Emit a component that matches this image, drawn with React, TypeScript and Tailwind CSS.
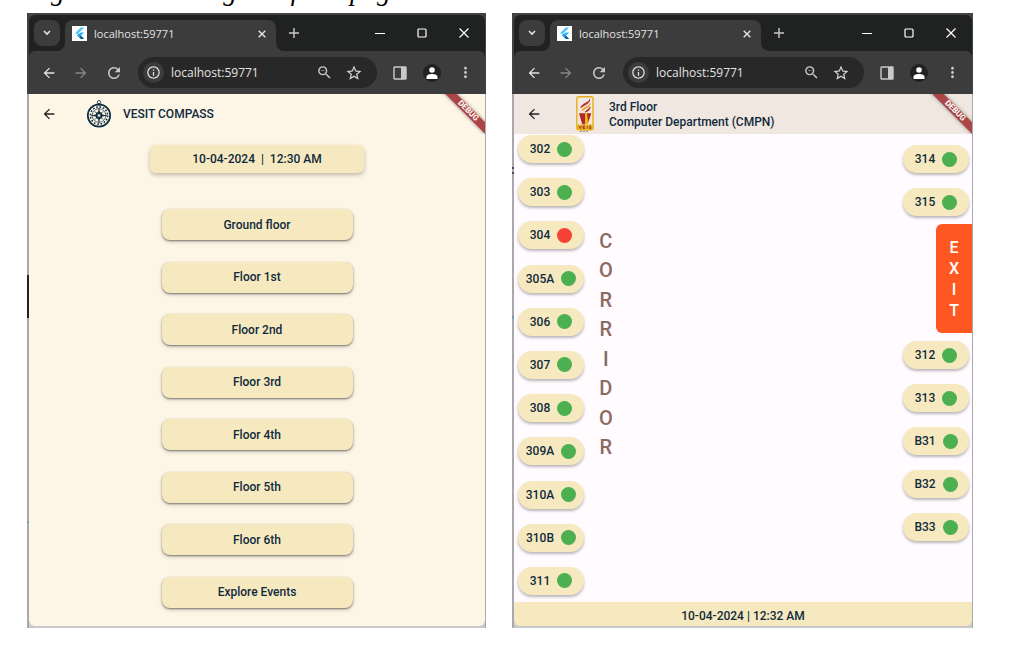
import React from "react";
import {
  MdArrowBack,
  MdArrowForward,
  MdInfoOutline,
  MdMoreVert,
  MdRefresh,
  MdStarBorder,
  MdZoomOut,
} from "react-icons/md";

const floors = [
  "Ground floor",
  "Floor 1st",
  "Floor 2nd",
  "Floor 3rd",
  "Floor 4th",
  "Floor 5th",
  "Floor 6th",
  "Explore Events",
];

type Room = { name: string; busy?: boolean };

const leftRooms: Room[] = [
  { name: "302" },
  { name: "303" },
  { name: "304", busy: true },
  { name: "305A" },
  { name: "306" },
  { name: "307" },
  { name: "308" },
  { name: "309A" },
  { name: "310A" },
  { name: "310B" },
  { name: "311" },
];
const rightTop: Room[] = [{ name: "314" }, { name: "315" }];
const rightBottom: Room[] = [
  { name: "312" },
  { name: "313" },
  { name: "B31" },
  { name: "B32" },
  { name: "B33" },
];

function FlutterIcon() {
  return (
    <svg viewBox="0 0 15 15" className="h-[15px] w-[15px] shrink-0">
      <rect width="15" height="15" fill="#fff" />
      <path d="M8.6 1.6h3.6L5.1 8.7 3.3 6.9z" fill="#54c5f8" />
      <path d="M8.6 6.4h3.6L9.2 9.4 7.4 11.2 5.3 9.6z" fill="#29b6f6" />
      <path d="M5.4 9.6 7.2 7.8 12.2 13H8.8z" fill="#01579b" />
      <path d="M5.4 9.6 7.2 7.8 9.1 9.6 7.3 11.4z" fill="#2ba7ee" />
    </svg>
  );
}

function CompassLogo() {
  return (
    <svg viewBox="0 0 26 30" className="h-[30px] w-[26px]" fill="none" stroke="#0c2c40">
      <circle cx="13" cy="3.2" r="1.7" strokeWidth="0.8" />
      <path d="M11.4 4.8h3.200v1.8h-3.200z" fill="#0c2c40" stroke="none" />
      <circle cx="13" cy="16.500" r="11.2" strokeWidth="1.7" />
      <circle cx="13" cy="16.500" r="8.600" strokeWidth="1.6" strokeDasharray="1.6 1.8" />
      <circle cx="13" cy="16.500" r="6.800" strokeWidth="0.7" />
      <circle cx="13" cy="16.500" r="2.800" strokeWidth="1.3" />
      <path
        d="M13 7.500l1.300 7.700L22 16.500l-7.700 1.300L13 25.500l-1.300-7.700L4 16.500l7.700-1.300z"
        fill="#0c2c40"
        stroke="none"
      />
      <path d="M9 12.500l2 2M17 12.500l-2 2M9 20.500l2-2M17 20.500l-2-2" strokeWidth="0.9" />
      <circle cx="13" cy="16.500" r="1.300" fill="#fdf5e6" stroke="none" />
    </svg>
  );
}

function CollegeLogo() {
  return (
    <svg viewBox="0 0 18 36" className="h-9 w-[18px]">
      <rect x="0.8" y="0.8" width="16.2" height="33" rx="1.8" fill="#f3e7df" stroke="#e3b01c" strokeWidth="1.4" />
      <path d="M1 28.5h16V33a1 1 0 0 1-1 1H2a1 1 0 0 1-1-1z" fill="#e8b41c" />
      <path d="M3 17.2h6v11H6.2z" fill="#b3262b" />
      <path d="M9 17.2h6.2L12 28.200H9z" fill="#e8b41c" />
      <path d="M11 17.2h4.200L12.300 26z" fill="#b3262b" />
      <path d="M13.600 3.500c.6 3-8.600 4.200-8.600 8.200 2-2.700 8.600-3.500 8.600-8.200z" fill="#b3262b" stroke="#b3262b" strokeWidth="0.9" />
      <path d="M14 7.400c.3 3-7.600 3.600-8 7.400 2.400-2.700 8.200-3.200 8-7.400z" fill="#e8a51c" stroke="#e8a51c" strokeWidth="0.9" />
      <path d="M14 11c0 2.400-4 2.600-4.800 5.200 2.200-.8 5-2.200 4.800-5.200z" fill="#b3262b" stroke="#b3262b" strokeWidth="0.8" />
      <path d="M3 30l1.300 2.500L5.500 30M9 30H7v2.500h2M7 31.200h1.800M11.300 30v2.500M13.200 30h1.800M13.200 31.200h1.800v1.300h-1.800" fill="none" stroke="#a3342a" strokeWidth="0.9" />
      <path d="M4 35.300h9" stroke="#6b5a50" strokeWidth="0.7" strokeDasharray="2 1" />
    </svg>
  );
}

function DebugRibbon() {
  return (
    <div className="pointer-events-none absolute top-0 right-0 h-10 w-12 overflow-hidden">
      <div className="absolute top-[13px] -right-[18px] h-2 w-[70px] rotate-45 bg-[#ad4545] text-center font-[Roboto] text-[8px] leading-2 font-bold text-white shadow-[0_0_4px_rgba(0,0,0,0.45)]">
        DEBUG
      </div>
    </div>
  );
}

function BrowserChrome() {
  return (
    <header className="border-t-2 border-r border-l-2 border-[#424347] bg-[#424347] font-['Open_Sans',sans-serif] text-[#e3e3e3]">
      <div className="flex h-9 items-end rounded-t-md bg-[#202221]">
        <button
          aria-label="Search tabs"
          className="mb-[5px] ml-[5px] flex h-[26px] w-[26px] shrink-0 items-center justify-center rounded-lg bg-[#3c3c3c]"
        >
          <svg viewBox="0 0 8 6" className="h-1.5 w-2" fill="none" stroke="#e3e3e3" strokeWidth="1.6">
            <path d="M1 1l3 3 3-3" />
          </svg>
        </button>
        <div className="relative ml-[5px] flex h-[31px] w-[211px] shrink-0 items-center rounded-t-lg bg-[#3c3c3c] pr-2.5 pb-1 pl-[7px]">
          <svg viewBox="0 0 8 8" className="absolute bottom-0 -left-2 h-2 w-2">
            <path d="M8 0v8H0a8 8 0 0 0 8-8z" fill="#3c3c3c" />
          </svg>
          <svg viewBox="0 0 8 8" className="absolute -right-2 bottom-0 h-2 w-2">
            <path d="M0 0v8h8a8 8 0 0 1-8-8z" fill="#3c3c3c" />
          </svg>
          <FlutterIcon />
          <span className="ml-[7px] grow text-[11px] leading-4 font-medium">localhost:59771</span>
          <button aria-label="Close tab">
            <svg viewBox="0 0 8 8" className="h-2 w-2" stroke="#e3e3e3" strokeWidth="1.4">
              <path d="M.7.7l6.600 6.600M7.300.7L.7 7.300" />
            </svg>
          </button>
        </div>
        <button aria-label="New tab" className="mb-[13px] ml-[13px]">
          <svg viewBox="0 0 10 10" className="h-2.5 w-2.5" stroke="#c9c9c9" strokeWidth="1.4">
            <path d="M5 0v10M0 5h10" />
          </svg>
        </button>
        <div className="mr-4 mb-[13px] ml-auto flex items-center gap-8">
          <button aria-label="Minimize">
            <svg viewBox="0 0 10 10" className="h-2.5 w-2.5" stroke="#fff">
              <path d="M0 5.500h10" />
            </svg>
          </button>
          <button aria-label="Maximize">
            <svg viewBox="0 0 10 10" className="h-2.5 w-2.5" fill="none" stroke="#fff" strokeWidth="1.2">
              <rect x="1" y="1" width="8" height="8" rx="1" />
            </svg>
          </button>
          <button aria-label="Close">
            <svg viewBox="0 0 10 10" className="h-2.5 w-2.5" stroke="#fff" strokeWidth="1.2">
              <path d="M.5.5l9 9M9.500.5l-9 9" />
            </svg>
          </button>
        </div>
      </div>
      <div className="bg-[#202221]">
        <div className="flex h-[43px] items-center rounded-t-md bg-[#3c3c3c] pr-[11px] pl-3">
          <button aria-label="Back">
            <MdArrowBack className="h-4 w-4" />
          </button>
          <button aria-label="Forward" className="ml-4 text-[#858585]">
            <MdArrowForward className="h-4 w-4" />
          </button>
          <button aria-label="Reload" className="ml-4 text-[#c9c9c9]">
            <MdRefresh className="h-[18px] w-[18px]" />
          </button>
          <div className="ml-[15px] flex h-[31px] min-w-0 grow items-center rounded-full bg-[#282828] pr-3.5 pl-[5px]">
            <span className="flex h-[21px] w-[21px] shrink-0 items-center justify-center rounded-full bg-[#3c3c3c]">
              <MdInfoOutline className="h-[15px] w-[15px]" />
            </span>
            <input
              aria-label="Address"
              defaultValue="localhost:59771"
              className="ml-[7px] w-0 min-w-0 grow bg-transparent text-[12px] leading-4 outline-none"
            />
            <button aria-label="Zoom">
              <MdZoomOut className="h-[17px] w-[17px] text-[#c9c9c9]" />
            </button>
            <button aria-label="Bookmark" className="ml-3">
              <MdStarBorder className="h-[18px] w-[18px] text-[#d6d6d6]" />
            </button>
          </div>
          <button aria-label="Side panel" className="ml-4">
            <svg viewBox="0 0 14 14" className="h-3.5 w-3.5">
              <rect x="1" y="1" width="12" height="12" rx="0.500" fill="none" stroke="#c9c9c9" strokeWidth="1.4" />
              <path d="M8 1h5v12H8z" fill="#c9c9c9" />
            </svg>
          </button>
          <button
            aria-label="Profile"
            className="ml-4 flex h-[18px] w-[18px] items-center justify-center rounded-full bg-[#202221]"
          >
            <svg viewBox="0 0 12 12" className="h-3 w-3" fill="#fff">
              <circle cx="6" cy="3" r="2.800" />
              <path d="M.5 12V9.800C.5 7.800 3.500 7 6 7s5.500.8 5.500 2.800V12z" />
            </svg>
          </button>
          <button aria-label="Menu" className="ml-4">
            <MdMoreVert className="h-[17px] w-[17px] text-[#c9c9c9]" />
          </button>
        </div>
      </div>
    </header>
  );
}

function BrowserWindow({ edge, children }: { edge: string; children: React.ReactNode }) {
  return (
    <section className="flex flex-col">
      <BrowserChrome />
      <div className="flex grow bg-[#a9a9ad]">
        <div className={"w-[2px] shrink-0 " + edge} />
        <div className="mr-px flex grow flex-col bg-[#c9cac9] pb-0.5">
          <div className="relative flex grow flex-col overflow-hidden rounded-b-md">{children}</div>
        </div>
      </div>
    </section>
  );
}

function RoomChip({ room }: { room: Room }) {
  return (
    <button className="flex h-7 w-[66px] items-center justify-center gap-[7px] rounded-full bg-[#f7e9bf] text-[12px] leading-4 font-medium shadow-[0_2px_3px_rgba(0,0,0,0.28)]">
      {room.name}
      <span className={"h-[15px] w-[15px] rounded-full " + (room.busy ? "bg-[#f44336]" : "bg-[#4caf50]")} />
    </button>
  );
}

export default function App() {
  return (
    <div className="flex min-h-screen flex-col bg-white pr-[50px] pb-[18px] pl-[27px] font-[Roboto,sans-serif] text-[#0f2a3d]">
      <div className="flex h-[13px] flex-col justify-end overflow-hidden pb-2">
        <p className="shrink-0 font-['Liberation_Serif',serif] text-[27px] leading-7 whitespace-nowrap text-black italic">
          Figure 10. Landing and floor page
        </p>
      </div>
      <main className="grid grow grid-cols-[459fr_461fr] gap-[26px]">
        <BrowserWindow edge="bg-[linear-gradient(#a9a9ad_181px,#222226_181px,#222226_224px,#a9a9ad_224px,#a9a9ad_427px,#6f9cc0_427px,#6f9cc0_429px,#a9a9ad_429px)]">
          <div className="flex grow flex-col items-center bg-[#fdf5e6]">
            <div className="flex h-10 w-full items-center pl-3">
              <button aria-label="Go back">
                <MdArrowBack className="h-4 w-4 text-[#1f2224]" />
              </button>
              <div className="ml-[29px]">
                <CompassLogo />
              </div>
              <h1 className="ml-[11px] text-[12px] leading-4 font-medium">VESIT COMPASS</h1>
            </div>
            <DebugRibbon />
            <div className="mt-[11px] flex h-7 w-[214px] items-center justify-center rounded-md bg-[#f7e9bf] text-[12px] leading-4 font-medium whitespace-pre shadow-[0_2px_4px_rgba(0,0,0,0.25)]">
              {"10-04-2024  |  12:30 AM"}
            </div>
            <nav className="mt-9 mb-[18px] flex grow flex-col justify-between">
              {floors.map((floor) => (
                <button
                  key={floor}
                  className="h-[31px] w-[191px] rounded-lg bg-[#f7e9bf] text-[12px] leading-4 font-medium shadow-[0_1px_2px_rgba(0,0,0,0.45),0_2px_4px_rgba(0,0,0,0.15)]"
                >
                  {floor}
                </button>
              ))}
            </nav>
          </div>
        </BrowserWindow>
        <BrowserWindow edge="bg-[linear-gradient(#a9a9ad_73px,#4a4a4e_73px,#4a4a4e_75px,#a9a9ad_75px,#a9a9ad_78px,#4a4a4e_78px,#4a4a4e_80px,#a9a9ad_80px,#a9a9ad_222px,#6f9cc0_222px,#6f9cc0_225px,#a9a9ad_225px)]">
          <div className="flex h-10 items-center bg-[#f1e7e1] pl-3">
            <button aria-label="Go back">
              <MdArrowBack className="h-4 w-4 text-[#1f2224]" />
            </button>
            <div className="ml-[34px]">
              <CollegeLogo />
            </div>
            <h1 className="ml-[15px] pt-px text-[12px] leading-[15px] font-medium">
              3rd Floor
              <br />
              Computer Department (CMPN)
            </h1>
          </div>
          <DebugRibbon />
          <div className="flex grow bg-[#fffbfe]">
            <div className="mt-px mb-[7px] ml-1 flex flex-col justify-between">
              {leftRooms.map((room) => (
                <RoomChip key={room.name} room={room} />
              ))}
            </div>
            <div className="mt-[93px] mb-[140px] ml-[15px] flex flex-col justify-between text-center text-[20px] leading-[29px] font-medium text-[#8a6a62]">
              {Array.from("CORRIDOR").map((letter, i) => (
                <span key={i}>{letter}</span>
              ))}
            </div>
            <div className="mt-[11px] ml-auto flex flex-col items-end">
              <div className="mr-[3px] flex flex-col gap-[15px]">
                {rightTop.map((room) => (
                  <RoomChip key={room.name} room={room} />
                ))}
              </div>
              <button className="mt-2 flex h-[109px] w-9 flex-col items-center justify-center rounded-l-md bg-[#ff5722] text-[16px] leading-[21px] font-medium text-white">
                {Array.from("EXIT").map((letter) => (
                  <span key={letter}>{letter}</span>
                ))}
              </button>
              <div className="mt-2 mr-[3px] flex flex-col gap-[15px]">
                {rightBottom.map((room) => (
                  <RoomChip key={room.name} room={room} />
                ))}
              </div>
            </div>
          </div>
          <footer className="flex h-6 items-center justify-center bg-[#f7e9bf] pt-1 text-[12px] leading-4 font-medium">
            10-04-2024 | 12:32 AM
          </footer>
        </BrowserWindow>
      </main>
    </div>
  );
}
